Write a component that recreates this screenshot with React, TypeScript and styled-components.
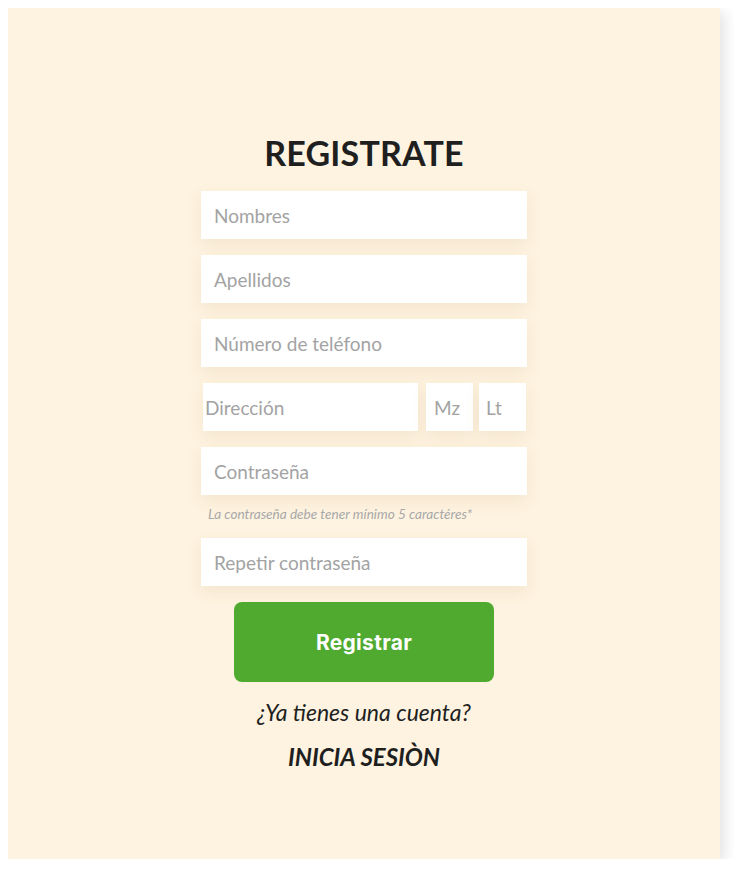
import styled, { createGlobalStyle } from "styled-components";

const GlobalStyle = createGlobalStyle`
  body {
    margin: 8px;
    background: #ffffff;
    font-family: "Lato", "Open Sans", sans-serif;
  }
`;

const Card = styled.div`
  width: 712px;
  height: 851px;
  box-sizing: border-box;
  background-color: #fef3e0;
  box-shadow: 4px 4px 14px rgba(0, 0, 0, 0.12);
  display: flex;
  flex-direction: column;
  align-items: center;
  padding-top: 121px;
`;

const Title = styled.h1`
  margin: 0 0 14px;
  font-family: "Lato", sans-serif;
  font-weight: 700;
  font-size: 34px;
  line-height: 48px;
  color: #1f1f1f;
  letter-spacing: 0.2px;
`;

const Form = styled.form`
  width: 326px;
  display: flex;
  flex-direction: column;
  gap: 16px;
`;

const Field = styled.input<{ $pad?: number }>`
  width: 100%;
  height: 48px;
  box-sizing: border-box;
  border: none;
  outline: none;
  background: #ffffff;
  padding: 0 0 0 ${({ $pad }) => ($pad ?? 13)}px;
  font-family: "Lato", sans-serif;
  font-size: 19px;
  color: #333;
  box-shadow: 0 6px 16px rgba(160, 120, 60, 0.1);

  &::placeholder {
    color: #a3a3a3;
  }
`;

const AddressRow = styled.div`
  display: flex;
  gap: 6px;
  padding: 0 2px;

  & > input:first-child {
    flex: 0 0 215px;
    margin-right: 2px;
  }
  & > input:not(:first-child) {
    flex: 0 0 47px;
  }
`;

const PasswordGroup = styled.div`
  display: flex;
  flex-direction: column;
`;

const Hint = styled.p`
  margin: 11px 0 0 7px;
  font-family: "Lato", sans-serif;
  font-style: italic;
  font-size: 13.6px;
  color: #a8a8a8;
`;

const Submit = styled.button`
  align-self: center;
  width: 260px;
  height: 80px;
  border: none;
  border-radius: 8px;
  background-color: #4faa2f;
  color: #ffffff;
  font-family: "Inter", sans-serif;
  font-weight: 700;
  font-size: 21px;
  letter-spacing: 0.3px;
  cursor: pointer;
`;

const Question = styled.p`
  margin: 16px 0 0;
  font-family: "Lato", sans-serif;
  font-style: italic;
  font-size: 23px;
  color: #1f1f1f;
`;

const LoginLink = styled.a`
  margin-top: 16px;
  font-family: "Lato", sans-serif;
  font-style: italic;
  font-weight: 700;
  font-size: 24px;
  color: #1f1f1f;
  text-decoration: none;
`;

export default function App() {
  return (
    <>
      <GlobalStyle />
      <Card>
        <Title>REGISTRATE</Title>
        <Form onSubmit={(e) => e.preventDefault()}>
          <Field placeholder="Nombres" />
          <Field placeholder="Apellidos" />
          <Field placeholder="Número de teléfono" />
          <AddressRow>
            <Field $pad={2} placeholder="Dirección" />
            <Field $pad={8} placeholder="Mz" />
            <Field $pad={7} placeholder="Lt" />
          </AddressRow>
          <PasswordGroup>
            <Field type="password" placeholder="Contraseña" />
            <Hint>La contraseña debe tener mínimo 5 caractéres*</Hint>
          </PasswordGroup>
          <Field type="password" placeholder="Repetir contraseña" />
          <Submit type="submit">Registrar</Submit>
        </Form>
        <Question>¿Ya tienes una cuenta?</Question>
        <LoginLink href="#">INICIA SESIÒN</LoginLink>
      </Card>
    </>
  );
}
